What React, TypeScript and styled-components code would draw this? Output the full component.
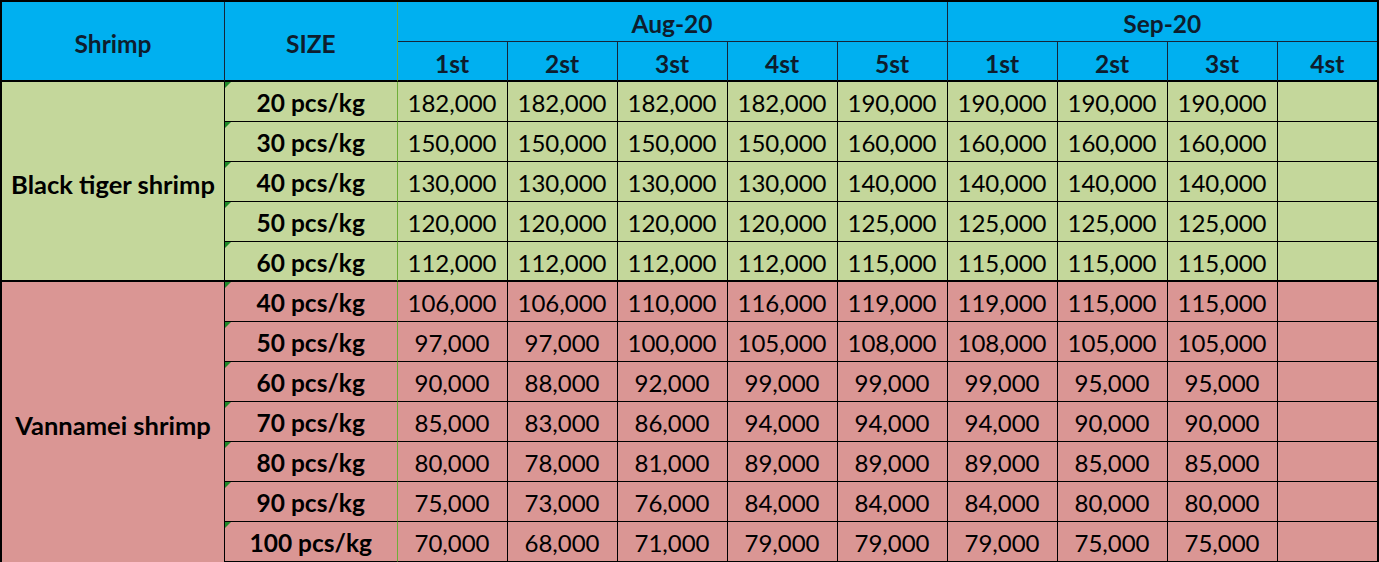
import React from "react";
import styled, { createGlobalStyle, css } from "styled-components";

const GlobalStyle = createGlobalStyle`
  html, body {
    margin: 0;
    padding: 0;
    background: #ffffff;
  }
  body {
    font-family: Lato, "Open Sans", "Liberation Sans", sans-serif;
  }
`;

const HEAD_BG = "#00b0f0";
const HEAD_LINE = "#14253a";
const GREEN_BG = "#c4d79b";
const RED_BG = "#da9694";
const GRID_GREEN = "#6fae3a";

type Tone = "green" | "red";

const Sheet = styled.div`
  display: grid;
  grid-template-columns: 223px 172.5px repeat(8, 110px) 1fr;
  grid-template-rows: 40px 40px repeat(12, 40px);
  width: 1379px;
  height: 562px;
  box-sizing: border-box;
  border-top: 2px solid #000;
  border-left: 2px solid #000;
  border-right: 2px solid #000;
  overflow: hidden;
`;

const Head = styled.div<{ $span?: number; $rows?: number; $green?: boolean; $low?: boolean; $last?: boolean }>`
  display: flex;
  align-items: center;
  justify-content: center;
  box-sizing: border-box;
  background: ${HEAD_BG};
  color: #0e1d2e;
  font-weight: 700;
  font-size: 24.5px;
  grid-column: span ${(p) => p.$span || 1};
  grid-row: span ${(p) => p.$rows || 1};
  border-right: 1px solid ${(p) => (p.$green ? GRID_GREEN : HEAD_LINE)};
  border-bottom: ${(p) => (p.$low ? `2px solid #000` : `1px solid ${HEAD_LINE}`)};
  ${(p) => p.$last && css`border-right: none;`}
  padding-top: ${(p) => (p.$low ? "5px" : "3px")};
`;

const GroupCell = styled.div<{ $tone: Tone; $rows: number }>`
  display: flex;
  align-items: center;
  justify-content: center;
  box-sizing: border-box;
  grid-row: span ${(p) => p.$rows};
  background: ${(p) => (p.$tone === "green" ? GREEN_BG : RED_BG)};
  border-right: 1px solid #000;
  border-bottom: ${(p) => (p.$tone === "green" ? "2px solid #000" : "none")};
  font-weight: 700;
  font-size: 25.5px;
  color: #000;
  padding-top: 5px;
  white-space: nowrap;
`;

const SizeCell = styled.div<{ $tone: Tone; $end?: boolean }>`
  position: relative;
  display: flex;
  align-items: center;
  justify-content: center;
  box-sizing: border-box;
  background: ${(p) => (p.$tone === "green" ? GREEN_BG : RED_BG)};
  border-right: 1px solid ${GRID_GREEN};
  border-bottom: ${(p) => (p.$end ? "2px solid #000" : "1px solid #000")};
  font-weight: 700;
  font-size: 24.5px;
  color: #000;
  padding-top: 2px;

  &::before {
    content: "";
    position: absolute;
    top: 0;
    left: 0;
    border-top: 6px solid #1f8a2a;
    border-right: 6px solid transparent;
  }
`;

const ValueCell = styled.div<{ $tone: Tone; $end?: boolean; $last?: boolean }>`
  display: flex;
  align-items: center;
  justify-content: center;
  box-sizing: border-box;
  background: ${(p) => (p.$tone === "green" ? GREEN_BG : RED_BG)};
  border-right: ${(p) => (p.$last ? "none" : "1px solid #000")};
  border-bottom: ${(p) => (p.$end ? "2px solid #000" : "1px solid #000")};
  font-size: 24px;
  color: #000;
  padding-top: 2px;
`;

const columns = ["1st", "2st", "3st", "4st", "5st", "1st", "2st", "3st", "4st"];

const groups: { name: string; tone: Tone; rows: { size: string; values: string[] }[] }[] = [
  {
    name: "Black tiger shrimp",
    tone: "green",
    rows: [
      { size: "20 pcs/kg", values: ["182,000", "182,000", "182,000", "182,000", "190,000", "190,000", "190,000", "190,000"] },
      { size: "30 pcs/kg", values: ["150,000", "150,000", "150,000", "150,000", "160,000", "160,000", "160,000", "160,000"] },
      { size: "40 pcs/kg", values: ["130,000", "130,000", "130,000", "130,000", "140,000", "140,000", "140,000", "140,000"] },
      { size: "50 pcs/kg", values: ["120,000", "120,000", "120,000", "120,000", "125,000", "125,000", "125,000", "125,000"] },
      { size: "60 pcs/kg", values: ["112,000", "112,000", "112,000", "112,000", "115,000", "115,000", "115,000", "115,000"] },
    ],
  },
  {
    name: "Vannamei shrimp",
    tone: "red",
    rows: [
      { size: "40 pcs/kg", values: ["106,000", "106,000", "110,000", "116,000", "119,000", "119,000", "115,000", "115,000"] },
      { size: "50 pcs/kg", values: ["97,000", "97,000", "100,000", "105,000", "108,000", "108,000", "105,000", "105,000"] },
      { size: "60 pcs/kg", values: ["90,000", "88,000", "92,000", "99,000", "99,000", "99,000", "95,000", "95,000"] },
      { size: "70 pcs/kg", values: ["85,000", "83,000", "86,000", "94,000", "94,000", "94,000", "90,000", "90,000"] },
      { size: "80 pcs/kg", values: ["80,000", "78,000", "81,000", "89,000", "89,000", "89,000", "85,000", "85,000"] },
      { size: "90 pcs/kg", values: ["75,000", "73,000", "76,000", "84,000", "84,000", "84,000", "80,000", "80,000"] },
      { size: "100 pcs/kg", values: ["70,000", "68,000", "71,000", "79,000", "79,000", "79,000", "75,000", "75,000"] },
    ],
  },
];

export default function App() {
  return (
    <>
      <GlobalStyle />
      <Sheet>
        <Head $rows={2} $low>Shrimp</Head>
        <Head $rows={2} $low $green>SIZE</Head>
        <Head $span={5}>Aug-20</Head>
        <Head $span={4} $last>Sep-20</Head>
        {columns.map((c, i) => (
          <Head key={i} $low $last={i === columns.length - 1}>
            {c}
          </Head>
        ))}
        {groups.map((g) => (
          <React.Fragment key={g.name}>
            <GroupCell $tone={g.tone} $rows={g.rows.length}>
              {g.name}
            </GroupCell>
            {g.rows.map((r, ri) => {
              const end = g.tone === "green" && ri === g.rows.length - 1;
              return (
                <React.Fragment key={r.size}>
                  <SizeCell $tone={g.tone} $end={end}>
                    {r.size}
                  </SizeCell>
                  {r.values.map((v, vi) => (
                    <ValueCell key={vi} $tone={g.tone} $end={end}>
                      {v}
                    </ValueCell>
                  ))}
                  <ValueCell $tone={g.tone} $end={end} $last />
                </React.Fragment>
              );
            })}
          </React.Fragment>
        ))}
      </Sheet>
    </>
  );
}
